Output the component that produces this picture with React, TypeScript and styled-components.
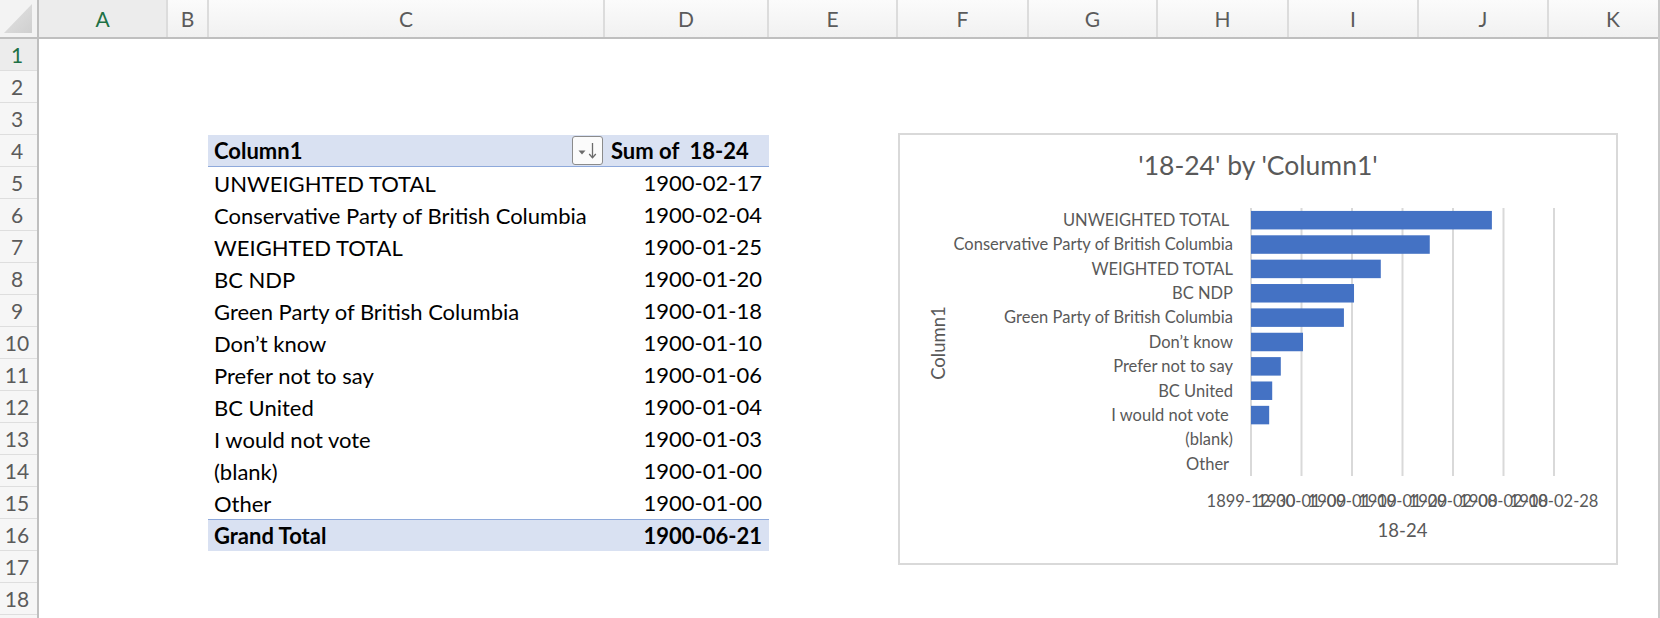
import React from 'react';
import styled, { createGlobalStyle } from 'styled-components';

const FONT = "Lato, 'Liberation Sans', sans-serif";

const GlobalStyle = createGlobalStyle`
  html, body {
    margin: 0;
    padding: 0;
    background: #ffffff;
  }
  body {
    font-family: ${FONT};
    overflow: hidden;
  }
`;

interface IColumn {
    name: string;
    width: number;
}

interface IPivotEntry {
    label: string;
    date: string;
    value: number;
}

const columns: IColumn[] = [
    { name: 'A', width: 129 },
    { name: 'B', width: 41 },
    { name: 'C', width: 396 },
    { name: 'D', width: 164 },
    { name: 'E', width: 129 },
    { name: 'F', width: 131 },
    { name: 'G', width: 129 },
    { name: 'H', width: 131 },
    { name: 'I', width: 130 },
    { name: 'J', width: 130 },
    { name: 'K', width: 130 },
];

const ROW_COUNT = 19;
const VISIBLE_ROWS = 18;
const ROW_HEIGHT = 32;

// value = days since 1899-12-30, as plotted on the chart
const entries: IPivotEntry[] = [
    { label: 'UNWEIGHTED TOTAL', date: '1900-02-17', value: 47.7 },
    { label: 'Conservative Party of British Columbia', date: '1900-02-04', value: 35.4 },
    { label: 'WEIGHTED TOTAL', date: '1900-01-25', value: 25.7 },
    { label: 'BC NDP', date: '1900-01-20', value: 20.4 },
    { label: 'Green Party of British Columbia', date: '1900-01-18', value: 18.4 },
    { label: 'Don\u2019t know', date: '1900-01-10', value: 10.3 },
    { label: 'Prefer not to say', date: '1900-01-06', value: 5.9 },
    { label: 'BC United', date: '1900-01-04', value: 4.2 },
    { label: 'I would not vote', date: '1900-01-03', value: 3.6 },
    { label: '(blank)', date: '1900-01-00', value: 0 },
    { label: 'Other', date: '1900-01-00', value: 0 },
];

// category labels as Excel drew them (some carry a trailing space)
const chartLabels = [
    'UNWEIGHTED TOTAL\u00a0',
    'Conservative Party of British Columbia',
    'WEIGHTED TOTAL',
    'BC NDP',
    'Green Party of British Columbia',
    'Don\u2019t know',
    'Prefer not to say',
    'BC United',
    'I would not vote\u00a0',
    '(blank)',
    'Other\u00a0',
];

const tickLabels = ['1899-12-30', '1900-01-09', '1900-01-19', '1900-01-29', '1900-02-08', '1900-02-18', '1900-02-28'];

const Sheet = styled.div`
  width: 1660px;
  height: 618px;
  box-sizing: border-box;
  border-right: 2px solid #c9c9c9;
  display: flex;
  flex-direction: column;
  overflow: hidden;
  background: #ffffff;
`;

const HeaderRow = styled.div`
  display: flex;
  flex-shrink: 0;
  height: 39px;
  box-sizing: border-box;
  border-bottom: 2px solid #bfbfbf;
`;

const Corner = styled.div`
  width: 39px;
  flex-shrink: 0;
  box-sizing: border-box;
  padding: 4px 5px 4px 4px;
  border-right: 2px solid #bfbfbf;
  background: #f3f3f3;
  display: flex;
`;

const CornerTriangle = styled.div`
  flex: 1;
  background: linear-gradient(135deg, #e4e4e4, #cfcfcf);
  clip-path: polygon(100% 0, 100% 100%, 0 100%);
`;

const ColHeader = styled.div<{ $width: number; $active?: boolean }>`
  width: ${(p) => p.$width}px;
  flex-shrink: 0;
  box-sizing: border-box;
  border-right: 2px solid #dcdcdc;
  background: ${(p) => (p.$active ? '#ececec' : 'linear-gradient(#fbfbfb, #f1f1f1)')};
  color: ${(p) => (p.$active ? '#1e7145' : '#5b5b5b')};
  font-size: 21px;
  line-height: 37px;
  text-align: center;
`;

const Body = styled.div`
  display: flex;
  flex: 1;
  min-height: 0;
`;

const RowHeaders = styled.div`
  width: 39px;
  flex-shrink: 0;
  box-sizing: border-box;
  border-right: 2px solid #bfbfbf;
  display: flex;
  flex-direction: column;
`;

const RowHeader = styled.div<{ $active?: boolean }>`
  height: ${ROW_HEIGHT}px;
  flex-shrink: 0;
  box-sizing: border-box;
  border-bottom: 1px solid #dedede;
  padding-right: 3px;
  background: ${(p) => (p.$active ? '#ececec' : '#f6f6f6')};
  color: ${(p) => (p.$active ? '#1e7145' : '#5b5b5b')};
  font-size: 21px;
  line-height: 32px;
  text-align: center;
`;

const Cells = styled.div`
  display: grid;
  grid-template-columns: ${columns.map((c) => `${c.width}px`).join(' ')};
  grid-template-rows: repeat(${ROW_COUNT}, ${ROW_HEIGHT}px);
  flex-shrink: 0;
`;

const PivotTable = styled.div`
  grid-column: 3 / 5;
  grid-row: 4 / 17;
  display: flex;
  flex-direction: column;
  margin-left: -1px;
  font-size: 22px;
  color: #000000;
`;

type RowKind = 'head' | 'body' | 'total';

const PivotRow = styled.div<{ $kind: RowKind }>`
  display: flex;
  height: ${ROW_HEIGHT}px;
  box-sizing: border-box;
  line-height: 31px;
  white-space: pre;
  font-weight: ${(p) => (p.$kind === 'body' ? 400 : 700)};
  background: ${(p) => (p.$kind === 'body' ? 'transparent' : '#d9e1f2')};
  border-top: ${(p) => (p.$kind === 'total' ? '1px solid #8ea9db' : '0')};
  border-bottom: ${(p) => (p.$kind === 'head' ? '1px solid #8ea9db' : '0')};
`;

const LabelCell = styled.div`
  width: 397px;
  box-sizing: border-box;
  padding: 0 2px 0 6px;
  display: flex;
  align-items: center;
  justify-content: space-between;
  overflow: hidden;
`;

const ValueCell = styled.div<{ $head?: boolean }>`
  flex: 1;
  box-sizing: border-box;
  padding: ${(p) => (p.$head ? '0 0 0 6px' : '0 7px 0 0')};
  text-align: ${(p) => (p.$head ? 'left' : 'right')};
`;

const SortButton = styled.div`
  width: 31px;
  height: 29px;
  box-sizing: border-box;
  border: 1px solid #8b8b8b;
  border-radius: 3px;
  background: #fbfbfb;
  display: flex;
  align-items: center;
  justify-content: center;
`;

const ChartFrame = styled.div`
  grid-column: 6 / 12;
  grid-row: 4 / 19;
  align-self: start;
  justify-self: start;
  width: 720px;
  height: 432px;
  margin-top: -2px;
  box-sizing: border-box;
  border: 2px solid #d9d9d9;
  background: #ffffff;
`;

const ChartSvg = styled.svg`
  display: block;
  width: 716px;
  height: 428px;
  font-family: ${FONT};
  fill: #595959;
`;

// plot geometry, in chart-frame pixels
const PLOT_LEFT = 353;
const PLOT_TOP = 75;
const PLOT_BOTTOM = 343;
const TICK_STEP = 50.5;
const AXIS_MAX = 60;
const BAND = (PLOT_BOTTOM - PLOT_TOP) / chartLabels.length;
const BAR_HEIGHT = 18.5;

const SortIcon = () => (
    <svg width="27" height="25" viewBox="0 0 27 25">
        <polygon points="4.5,12.5 11.5,12.5 8,16.5" fill="#6b6b6b" />
        <line x1="18.5" y1="5" x2="18.5" y2="19.5" stroke="#6b6b6b" strokeWidth="1.3" />
        <polyline points="15.2,16 18.5,19.8 21.8,16" fill="none" stroke="#6b6b6b" strokeWidth="1.3" />
    </svg>
);

const BarChart = () => {
    const pxPerUnit = (TICK_STEP * (tickLabels.length - 1)) / AXIS_MAX;
    return (
        <ChartSvg viewBox="2 2 716 428">
            <text x="360" y="42" textAnchor="middle" fontSize="26.5">
                &apos;18-24&apos; by &apos;Column1&apos;
            </text>
            {tickLabels.map((tick, k) => (
                <line
                  key={`grid-${tick}`}
                  x1={PLOT_LEFT + k * TICK_STEP}
                  x2={PLOT_LEFT + k * TICK_STEP}
                  y1={PLOT_TOP}
                  y2={PLOT_BOTTOM}
                  stroke="#d9d9d9"
                  strokeWidth="2"
                />
            ))}
            {chartLabels.map((label, i) => (
                <text
                  key={`cat-${label}`}
                  x="335"
                  y={PLOT_TOP + BAND * (i + 0.5) + 5.8}
                  textAnchor="end"
                  fontSize="16.5"
                >
                    {label}
                </text>
            ))}
            {entries.filter((e) => e.value > 0).map((entry, i) => (
                <rect
                  key={`bar-${entry.label}`}
                  x={PLOT_LEFT}
                  y={PLOT_TOP + BAND * i + (BAND - BAR_HEIGHT) / 2}
                  width={entry.value * pxPerUnit}
                  height={BAR_HEIGHT}
                  fill="#4472c4"
                />
            ))}
            {tickLabels.map((tick, k) => (
                <text
                  key={`tick-${tick}`}
                  x={PLOT_LEFT + k * TICK_STEP}
                  y="374"
                  textAnchor="middle"
                  fontSize="16.5"
                >
                    {tick}
                </text>
            ))}
            <text x={PLOT_LEFT + TICK_STEP * 3} y="404" textAnchor="middle" fontSize="18.5">18-24</text>
            <text transform="translate(47 210) rotate(-90)" textAnchor="middle" fontSize="18.5">Column1</text>
        </ChartSvg>
    );
};

const App = () => {
    const rowNumbers = Array.from({ length: ROW_COUNT }, (_, i) => i + 1);

    return (
        <>
            <GlobalStyle />
            <Sheet>
                <HeaderRow>
                    <Corner>
                        <CornerTriangle />
                    </Corner>
                    {columns.map((col) => (
                        <ColHeader key={col.name} $width={col.width} $active={col.name === 'A'}>
                            {col.name}
                        </ColHeader>
                    ))}
                </HeaderRow>
                <Body>
                    <RowHeaders>
                        {rowNumbers.map((n) => (
                            <RowHeader key={n} $active={n === 1}>
                                {n <= VISIBLE_ROWS ? n : ''}
                            </RowHeader>
                        ))}
                    </RowHeaders>
                    <Cells>
                        <PivotTable>
                            <PivotRow $kind="head">
                                <LabelCell>
                                    Column1
                                    <SortButton>
                                        <SortIcon />
                                    </SortButton>
                                </LabelCell>
                                <ValueCell $head>Sum of  18-24</ValueCell>
                            </PivotRow>
                            {entries.map((entry) => (
                                <PivotRow key={entry.label} $kind="body">
                                    <LabelCell>{entry.label}</LabelCell>
                                    <ValueCell>{entry.date}</ValueCell>
                                </PivotRow>
                            ))}
                            <PivotRow $kind="total">
                                <LabelCell>Grand Total</LabelCell>
                                <ValueCell>1900-06-21</ValueCell>
                            </PivotRow>
                        </PivotTable>
                        <ChartFrame>
                            <BarChart />
                        </ChartFrame>
                    </Cells>
                </Body>
            </Sheet>
        </>
    );
};

export default App;
